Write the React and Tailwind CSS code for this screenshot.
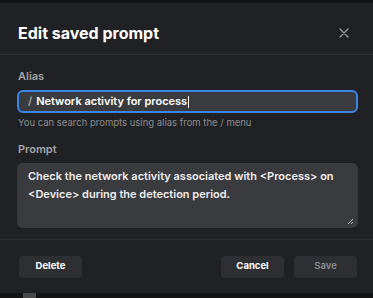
import React from "react";

export default function App() {
  return (
    <div className="w-[373px] h-[298px] bg-[#202124] flex flex-col overflow-hidden" style={{ fontFamily: "Inter, 'Noto Sans', sans-serif" }}>
      <div className="h-[3px] bg-[#141414] shrink-0" />
      <div className="h-[52px] shrink-0 flex items-center justify-between pt-[9px] pl-[18px] pr-[24px] border-b border-[#303134]">
        <h1 className="text-[16px] font-bold text-white leading-[20px]">Edit saved prompt</h1>
        <svg width="10" height="10" viewBox="0 0 10 10" className="text-[#9a9b9e]">
          <path d="M1 1 L9 9 M9 1 L1 9" stroke="currentColor" strokeWidth="1.3" strokeLinecap="round" />
        </svg>
      </div>
      <div className="flex flex-col pl-[17px] pr-[15px] pt-[13px] h-[184px] shrink-0">
        <label className="text-[11px] font-semibold text-[#a3a4a7] leading-[16px] pl-[1px]">Alias</label>
        <div className="mt-[6px] h-[23px] rounded-[6px] border-2 border-[#3a85e6] bg-[#3a3b3e] flex items-center pl-[9px] text-[11px] font-semibold">
          <span className="text-[#a3a4a7] mr-[4px]">/</span>
          <span className="text-white">Network activity for process</span>
          <span className="w-px h-[12px] bg-white ml-[1px]" />
        </div>
        <p className="mt-[3px] text-[9.5px] text-[#8d8e91] leading-[14px] pl-[1px]">You can search prompts using alias from the / menu</p>
        <label className="mt-[11px] text-[11px] font-semibold text-[#a3a4a7] leading-[16px] pl-[1px]">Prompt</label>
        <div className="relative mt-[6px] h-[65px] rounded-[6px] bg-[#3a3b3e] pl-[11px] pt-[4px] pr-[8px] text-[11px] font-semibold text-[#eeeeee] leading-[18px]">
          Check the network activity associated with &lt;Process&gt; on &lt;Device&gt; during the detection period.
          <svg width="7" height="7" viewBox="0 0 7 7" className="absolute right-[4px] bottom-[3px]">
            <path d="M6 1 L1 6 M6 4 L4 6" stroke="#bbbbbb" strokeWidth="1" />
          </svg>
        </div>
      </div>
      <div className="h-[54px] shrink-0 border-t border-[#303134] flex items-center pl-[19px] pr-[16px]">
        <button className="w-[63px] h-[22px] rounded-[4px] bg-[#2e2f32] text-[9.5px] font-bold text-white">Delete</button>
        <div className="flex-1" />
        <button className="w-[63px] h-[22px] rounded-[4px] bg-[#2e2f32] text-[9.5px] font-bold text-white">Cancel</button>
        <button className="ml-[10px] w-[63px] h-[22px] rounded-[4px] bg-[#2e2f32] text-[9.5px] font-semibold text-[#8d8e91]">Save</button>
      </div>
      <div className="flex-1 bg-[#141414] flex">
        <div className="ml-[23px] w-[13px] bg-[#4a4a4a]" />
      </div>
    </div>
  );
}
